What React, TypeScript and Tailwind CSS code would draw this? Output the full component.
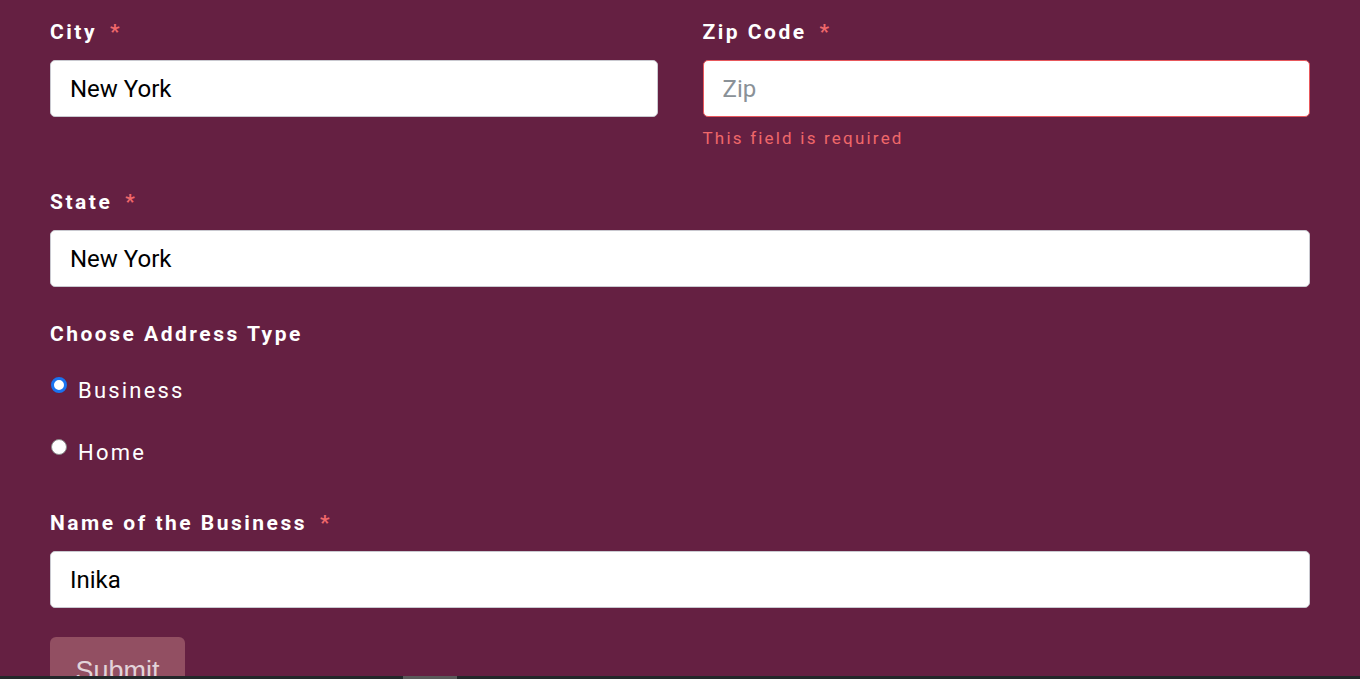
import React from "react";

const font = { fontFamily: "Roboto, 'Liberation Sans', sans-serif" };

const Label = ({ text, required = true }: { text: string; required?: boolean }) => (
  <label className="block text-[21px] leading-[28px] font-bold tracking-[2.5px] text-white">
    {text}
    {required && <span className="ml-[13px] text-[#f0686a]">*</span>}
  </label>
);

const Field = ({
  value,
  placeholder,
  error,
}: {
  value?: string;
  placeholder?: string;
  error?: boolean;
}) => (
  <input
    defaultValue={value}
    placeholder={placeholder}
    className={`block w-full h-[57px] rounded-[5px] bg-white px-[19px] text-[24px] text-black placeholder:text-[#8a9197] outline-none border ${
      error ? "border-[#e8585c]" : "border-[#c9c9d0]"
    }`}
    style={font}
  />
);

const Radio = ({ label, checked }: { label: string; checked?: boolean }) => (
  <label className="flex items-start gap-[11px] text-[22px] leading-[28px] tracking-[2.2px] text-white">
    <span
      className={`mt-[1px] ml-[1px] w-[16px] h-[16px] rounded-full shrink-0 ${
        checked ? "bg-white border-[3px] border-[#1a73f0]" : "bg-white border border-[#8a8a8a]"
      }`}
    />
    <span className="mt-[1px]">{label}</span>
  </label>
);

export default function App() {
  return (
    <div className="h-screen flex flex-col overflow-hidden bg-[#652042]" style={font}>
      <div className="flex-1 min-h-0 overflow-hidden px-[50px] pt-[18px]">
        <div className="grid grid-cols-2 gap-x-[45px] w-[1260px]">
          <div>
            <Label text="City" />
            <div className="mt-[14px]">
              <Field value="New York" />
            </div>
          </div>
          <div>
            <Label text="Zip Code" />
            <div className="mt-[14px]">
              <Field placeholder="Zip" error />
            </div>
            <p className="mt-[9px] text-[17px] leading-[24px] tracking-[2.2px] text-[#f0686a]">
              This field is required
            </p>
          </div>
        </div>

        <div className="mt-[38px] w-[1260px]">
          <Label text="State" />
          <div className="mt-[14px]">
            <Field value="New York" />
          </div>
        </div>

        <div className="mt-[33px]">
          <Label text="Choose Address Type" required={false} />
        </div>
        <div className="mt-[28px]">
          <Radio label="Business" checked />
        </div>
        <div className="mt-[33px]">
          <Radio label="Home" />
        </div>

        <div className="mt-[42px] w-[1260px]">
          <Label text="Name of the Business" />
          <div className="mt-[14px]">
            <Field value="Inika" />
          </div>
        </div>

        <button
          className="mt-[29px] w-[135px] h-[60px] rounded-[6px] bg-[#924f62] text-[27px] text-[#e2d3d9] pt-[8px]"
          style={{ fontFamily: "'Liberation Sans', Arial, sans-serif" }}
        >
          Submit
        </button>
      </div>
      <div className="h-[3px] bg-[#23282a] shrink-0 relative">
        <div className="absolute left-[403px] top-0 h-[3px] w-[54px] bg-[#5a5a5a]" />
      </div>
    </div>
  );
}
